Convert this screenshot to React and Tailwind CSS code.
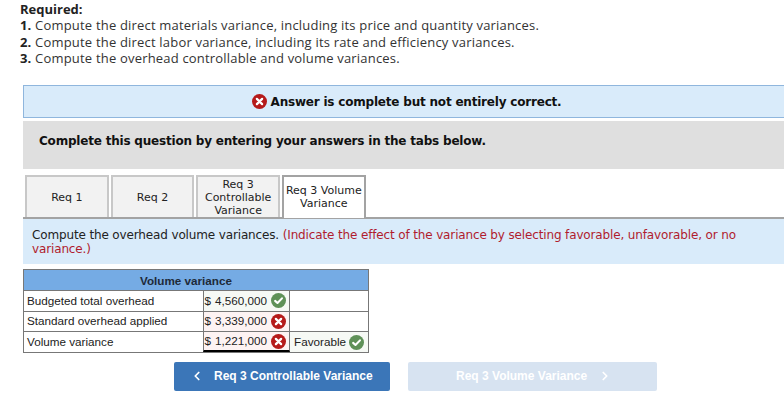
import React from 'react';
import { ChevronLeft, ChevronRight } from 'lucide-react';

const verdana = 'font-["DejaVu_Sans",sans-serif]';

function WrongIcon({ className = 'w-[15px] h-[15px]' }) {
  return (
    <svg viewBox="0 0 16 16" className={`shrink-0 ${className}`}>
      <circle cx="8" cy="8" r="8" fill="#b51a1a" />
      <path d="M5.2 5.2l5.6 5.6M10.8 5.2l-5.6 5.6" stroke="#fff" strokeWidth="2.4" strokeLinecap="round" />
    </svg>
  );
}

function RightIcon() {
  return (
    <svg viewBox="0 0 16 16" className="shrink-0 w-[15px] h-[15px]">
      <circle cx="8" cy="8" r="8" fill="#5f9158" />
      <path d="M4.4 8.4l2.5 2.3 4.8-5" fill="none" stroke="#fff" strokeWidth="2.2" strokeLinecap="round" strokeLinejoin="round" />
    </svg>
  );
}

function Tab({ children, active }) {
  return (
    <div
      className={`w-[83.67px] flex items-center justify-center text-center text-[11px] leading-[13px] text-[#222] border-2 border-b-0 ${
        active ? 'bg-white border-[#a3a3a3] h-[43px] -mb-px relative z-10 pb-[2px]' : 'bg-[#f2f2f2] border-[#c8c8c8] h-[42px]'
      }`}
    >
      {children}
    </div>
  );
}

function Row({ label, amount, mark, last, note }) {
  return (
    <div className={`grid grid-cols-[178.5px_87.5px_1fr] h-[20.33px] ${last ? '' : 'border-b border-[#777]'}`}>
      <div className="pl-[3px] flex items-center">{label}</div>
      <div className={`flex items-center border-x border-[#777] pl-[1px] pr-[3px] ${mark === 'ok' ? 'bg-[#f6f9f5]' : 'bg-[#fdf3f3]'} ${last ? 'border-b-2 border-b-black' : ''}`}>
        <span>$</span>
        <span className="ml-auto mr-[4px]">{amount}</span>
        {mark === 'ok' ? <RightIcon /> : <WrongIcon />}
      </div>
      <div className={`flex items-center pl-[4px] ${note ? 'bg-[#f6f9f5]' : ''}`}>
        {note && <span className="mr-[3px]">{note}</span>}
        {note && <RightIcon />}
      </div>
    </div>
  );
}

export default function App() {
  return (
    <div className="w-[784px] h-[412px] bg-white overflow-hidden">
      <div className='pl-[20px] pt-[1px] font-["Open_Sans",sans-serif] text-[13px] leading-[16.3px] tracking-[0.19px] text-[#333]'>
        <div className="font-bold text-[#222] tracking-normal">Required:</div>
        <div><b className="text-[#222]">1.</b> Compute the direct materials variance, including its price and quantity variances.</div>
        <div><b className="text-[#222]">2.</b> Compute the direct labor variance, including its rate and efficiency variances.</div>
        <div><b className="text-[#222]">3.</b> Compute the overhead controllable and volume variances.</div>
      </div>

      <div className={`ml-[23px] mt-[19px] ${verdana}`}>
        <div className="h-[33px] bg-[#d9ebfa] border border-r-0 border-[#8fb6dd] flex items-center justify-center gap-[4px] pl-[5px] text-[12px] tracking-[-0.2px] font-bold text-[#111]">
          <WrongIcon />
          <span>Answer is complete but not entirely correct.</span>
        </div>
        <div className="mt-[3px] h-[48px] bg-[#dfdfdf] pl-[16px] pt-[12px] text-[12px] leading-[16px] tracking-[-0.2px] font-bold text-[#111]">
          Complete this question by entering your answers in the tabs below.
        </div>

        <div className="mt-[6px] flex gap-[2px] pl-[2px] border-b-2 border-[#a3a3a3]">
          <Tab>Req 1</Tab>
          <Tab>Req 2</Tab>
          <Tab>Req 3<br />Controllable<br />Variance</Tab>
          <Tab active>Req 3 Volume<br />Variance</Tab>
        </div>
        <div className="h-[45px] bg-[#d9ebfa] pl-[9px] pr-[30px] pt-[9px] text-[12px] leading-[14px] tracking-[-0.14px] text-[#222]">
          Compute the overhead volume variances. <span className="text-[#b01c2e]">(Indicate the effect of the variance by selecting favorable, unfavorable, or no variance.)</span>
        </div>
      </div>

      <div className='ml-[23px] mt-[5px] w-[346px] border border-[#777] font-["Liberation_Sans",sans-serif] text-[11.7px] text-[#222]'>
        <div className="h-[21px] bg-[#75abe4] border-b border-[#777] flex items-center justify-center pr-[20px] pt-[1px] font-bold text-[#1e2a38]">
          Volume variance
        </div>
        <Row label="Budgeted total overhead" amount="4,560,000" mark="ok" />
        <Row label="Standard overhead applied" amount="3,339,000" mark="bad" />
        <Row label="Volume variance" amount="1,221,000" mark="bad" last note="Favorable" />
      </div>

      <div className='ml-[174px] mt-[9px] flex gap-[18px] font-["Liberation_Sans",sans-serif] text-[12px] font-bold text-white'>
        <div className="w-[216px] h-[29px] rounded-[2px] bg-[#3b76b8] flex items-center pl-[16px] pb-[1px]">
          <ChevronLeft size={14} strokeWidth={3} />
          <span className="ml-[10px]">Req 3 Controllable Variance</span>
        </div>
        <div className="w-[249px] h-[29px] rounded-[2px] bg-[#d7e3f1] flex items-center pl-[48px] pb-[1px]">
          <span>Req 3 Volume Variance</span>
          <ChevronRight size={14} strokeWidth={3} className="ml-[11px]" />
        </div>
      </div>
    </div>
  );
}
